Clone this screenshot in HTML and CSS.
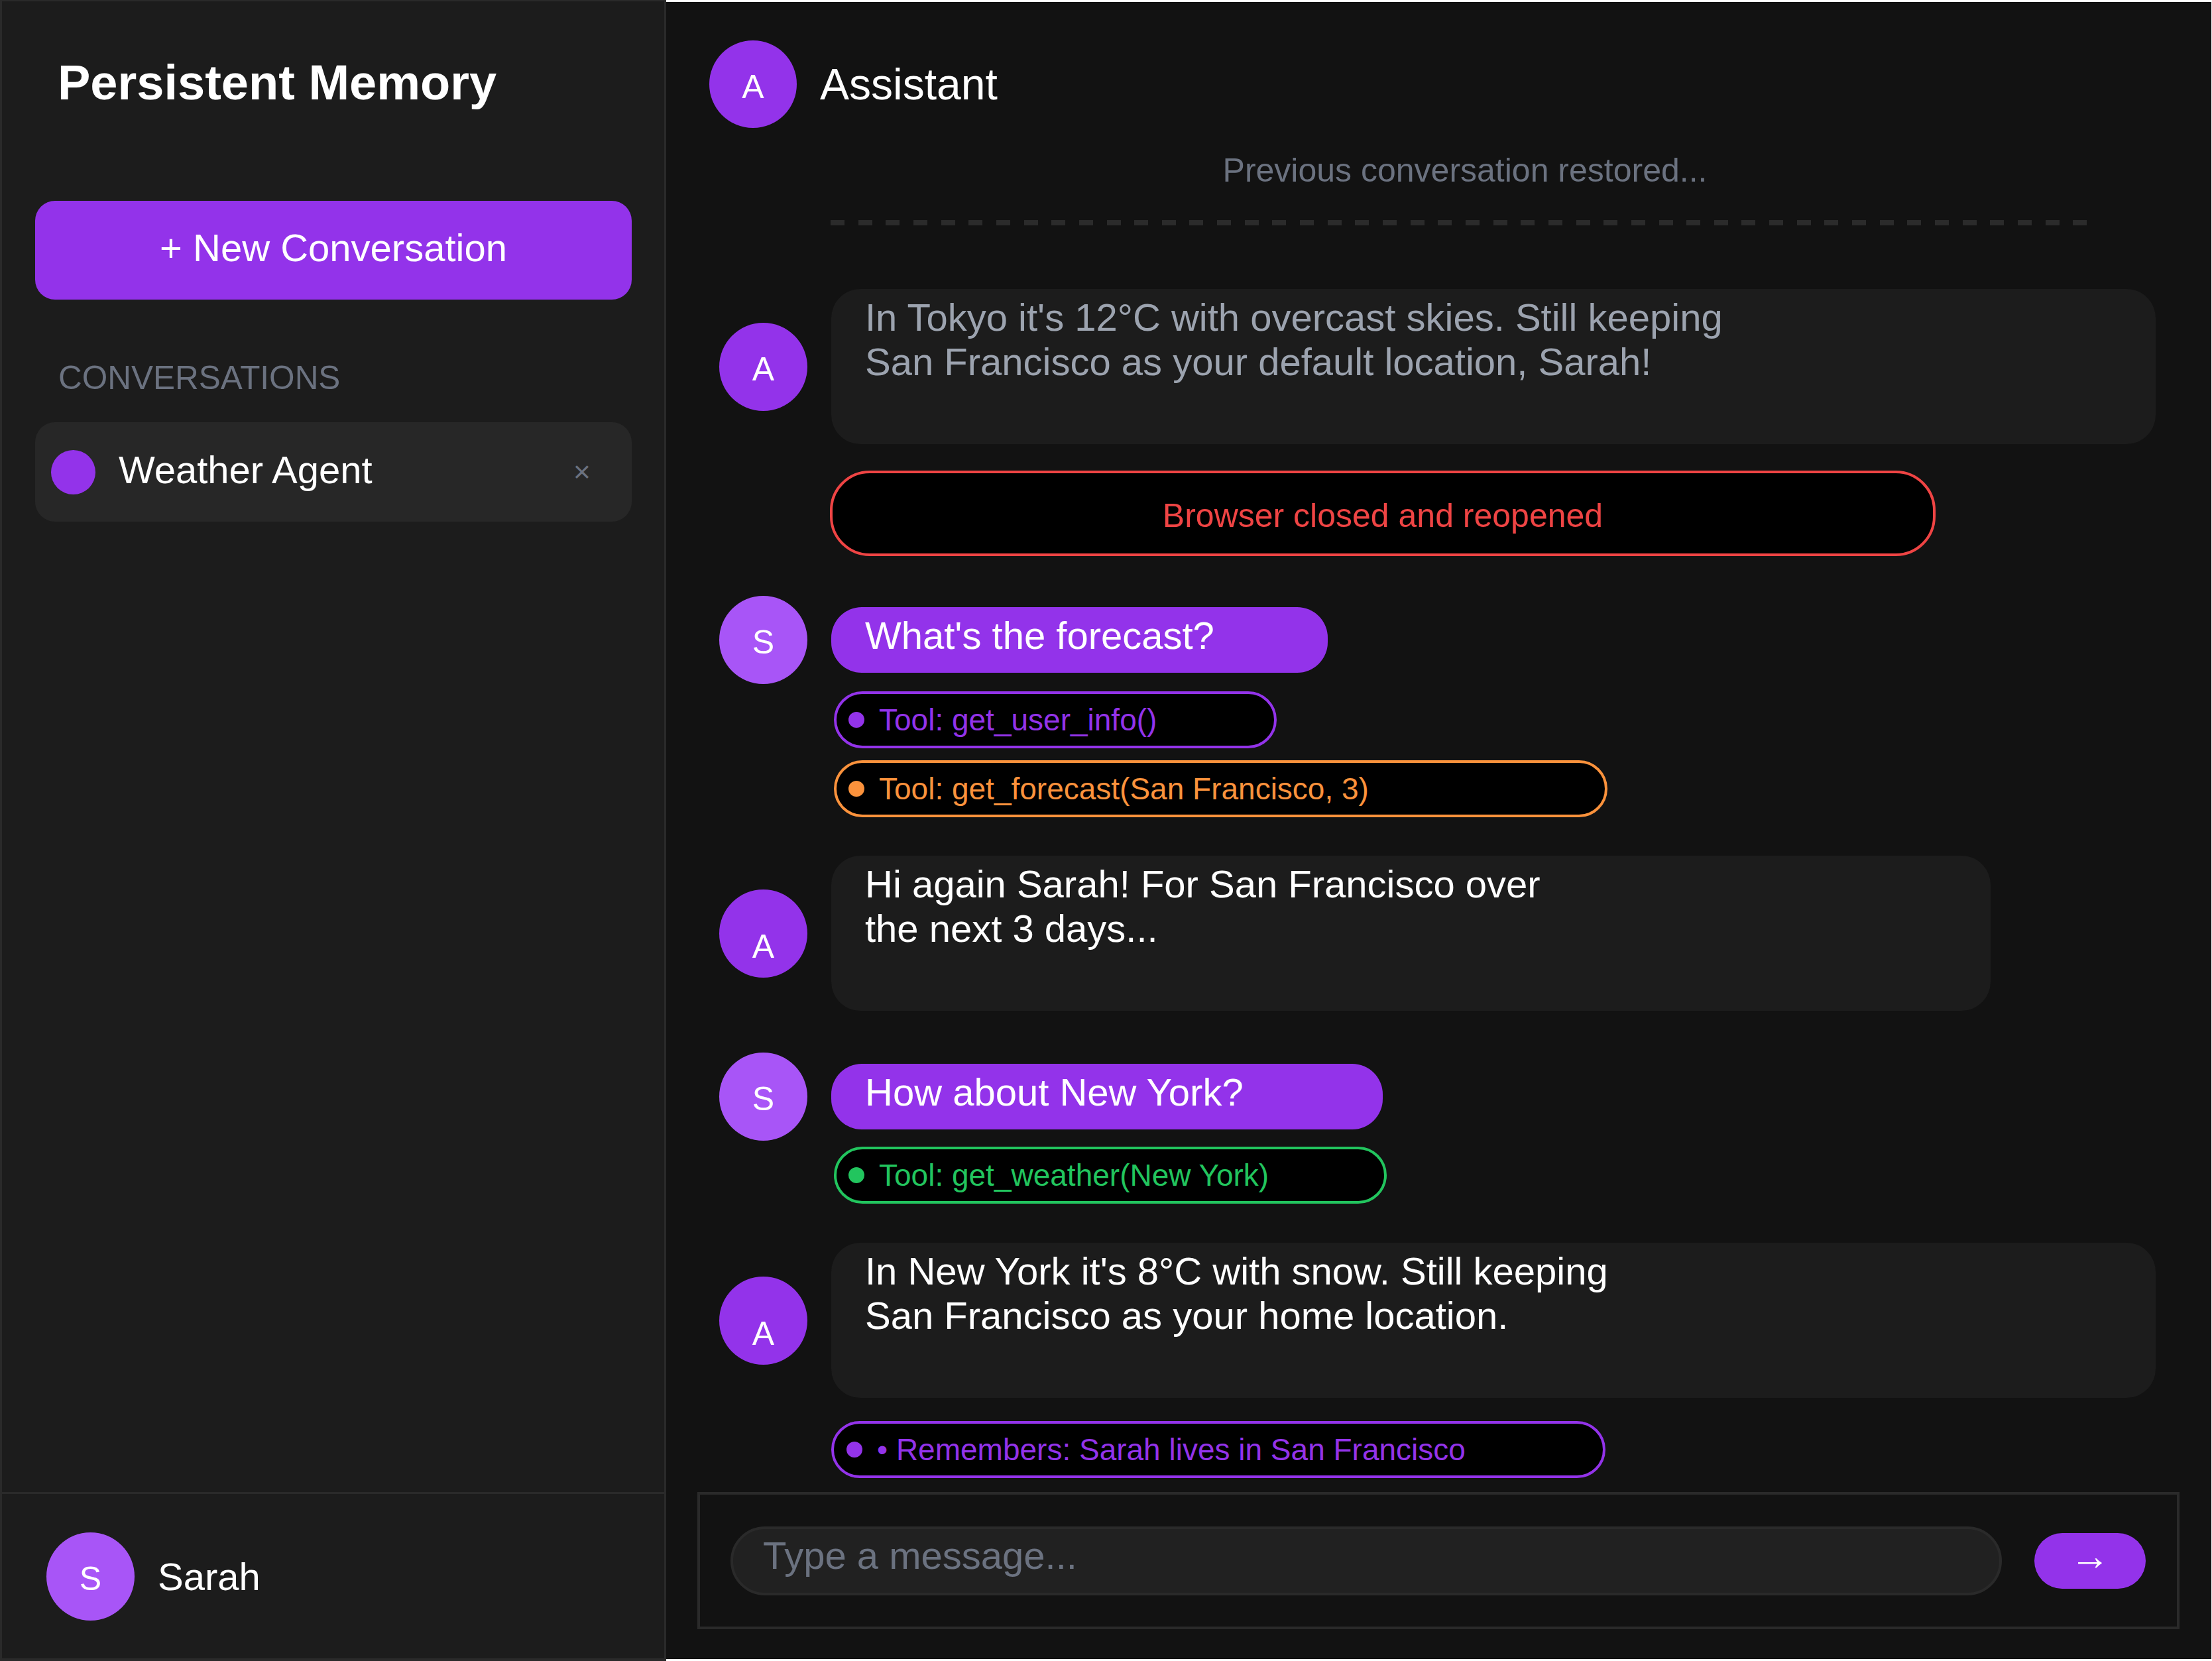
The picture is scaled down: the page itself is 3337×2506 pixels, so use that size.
FILE: index.html
```html
<!DOCTYPE html>
<html lang="en">
<head>
<meta charset="utf-8">
<title>Persistent Memory</title>
<link rel="stylesheet" href="styles.css">
</head>
<body>
<div class="app">
  <aside class="sidebar">
    <div class="sidebar-top">
      <h1 class="brand">Persistent Memory</h1>
      <button class="new-btn">+ New Conversation</button>
      <div class="section-label">CONVERSATIONS</div>
      <div class="conv-item">
        <span class="conv-dot"></span>
        <span class="conv-name">Weather Agent</span>
        <span class="conv-close">×</span>
      </div>
    </div>
    <div class="sidebar-footer">
      <div class="avatar avatar-user">S</div>
      <span class="user-name">Sarah</span>
    </div>
  </aside>

  <main class="chat">
    <header class="chat-header">
      <div class="avatar avatar-bot avatar-header">A</div>
      <span class="chat-title">Assistant</span>
    </header>

    <div class="messages">
      <div class="restored">Previous conversation restored...</div>
      <div class="divider"></div>

      <div class="msg mt-96">
        <div class="avatar avatar-bot">A</div>
        <div class="bubble bubble-bot bubble-muted w-wide">In Tokyo it's 12°C with overcast skies. Still keeping<br>San Francisco as your default location, Sarah!</div>
      </div>

      <div class="event mt-40">Browser closed and reopened</div>

      <div class="msg mt-60">
        <div class="avatar avatar-user">S</div>
        <div class="bubble bubble-user w-u1">What's the forecast?</div>
      </div>

      <div class="tool tool-purple tool-w1 mt-11"><span class="tool-dot"></span>Tool: get_user_info()</div>
      <div class="tool tool-orange tool-w2 mt-18"><span class="tool-dot"></span>Tool: get_forecast(San Francisco, 3)</div>

      <div class="msg mt-58">
        <div class="avatar avatar-bot avatar-low">A</div>
        <div class="bubble bubble-bot w-a2">Hi again Sarah! For San Francisco over<br>the next 3 days...</div>
      </div>

      <div class="msg mt-63">
        <div class="avatar avatar-user">S</div>
        <div class="bubble bubble-user w-u2">How about New York?</div>
      </div>

      <div class="tool tool-green tool-w3 mt-9"><span class="tool-dot"></span>Tool: get_weather(New York)</div>

      <div class="msg mt-59">
        <div class="avatar avatar-bot avatar-low">A</div>
        <div class="bubble bubble-bot w-wide">In New York it's 8°C with snow. Still keeping<br>San Francisco as your home location.</div>
      </div>

      <div class="tool tool-purple tool-memory mt-35"><span class="tool-dot"></span>• Remembers: Sarah lives in San Francisco</div>
    </div>

    <div class="composer">
      <input class="composer-input" type="text" placeholder="Type a message...">
      <button class="send-btn">→</button>
    </div>
  </main>
</div>
</body>
</html>
```

FILE: styles.css
```css
* {
  box-sizing: border-box;
}

html,
body {
  margin: 0;
  padding: 0;
}

body {
  width: 3337px;
  height: 2506px;
  overflow: hidden;
  background: #ffffff;
  font-family: "Liberation Sans", Arial, sans-serif;
}

.app {
  display: flex;
  height: 2506px;
}

/* ---------- Sidebar ---------- */

.sidebar {
  width: 1005px;
  height: 2506px;
  flex: none;
  display: flex;
  flex-direction: column;
  background: #1c1c1c;
  border-style: solid;
  border-color: #2a2a2a;
  border-width: 2px 3px 4px 3px;
}

.sidebar-top {
  display: flex;
  flex-direction: column;
  align-items: flex-start;
  padding: 80px 49px 0 50px;
}

.brand {
  margin: 0 0 0 34px;
  font-size: 74px;
  font-weight: 700;
  line-height: normal;
  color: #ffffff;
}

.new-btn {
  margin-top: 136px;
  width: 900px;
  height: 149px;
  padding: 37px 0 45px;
  border: none;
  border-radius: 30px;
  background: #9333ea;
  color: #ffffff;
  font-family: "Liberation Sans", Arial, sans-serif;
  font-size: 58px;
  line-height: normal;
}

.section-label {
  margin: 89px 0 0 35px;
  font-size: 49.5px;
  line-height: normal;
  color: #6b7280;
}

.conv-item {
  margin-top: 39px;
  width: 900px;
  height: 150px;
  display: flex;
  align-items: center;
  padding: 0 62px 0 24px;
  border-radius: 30px;
  background: #272727;
}

.conv-dot {
  width: 67px;
  height: 67px;
  flex: none;
  border-radius: 50%;
  background: #9333ea;
}

.conv-name {
  margin: 0 0 8px 35px;
  font-size: 58px;
  color: #ffffff;
}

.conv-close {
  margin-left: auto;
  font-size: 45px;
  color: #6b7280;
}

.sidebar-footer {
  margin-top: auto;
  height: 251px;
  display: flex;
  align-items: center;
  gap: 35px;
  padding-left: 67px;
  border-top: 3px solid #2a2a2a;
}

.user-name {
  font-size: 58px;
  color: #ffffff;
}

/* ---------- Avatars ---------- */

.avatar {
  width: 133px;
  height: 133px;
  flex: none;
  display: flex;
  align-items: center;
  justify-content: center;
  padding-top: 7px;
  border-radius: 50%;
  color: #ffffff;
  font-size: 50px;
  line-height: normal;
}

.avatar-user {
  background: #a855f7;
}

.avatar-bot {
  background: #9333ea;
}

.avatar-low {
  padding-top: 40px;
}

.avatar-header {
  width: 132px;
  height: 132px;
}

/* ---------- Chat ---------- */

.chat {
  flex: 1;
  min-width: 0;
  margin: 3px 1px 3px 0;
  display: flex;
  flex-direction: column;
  background: #121212;
}

.chat-header {
  display: flex;
  align-items: center;
  gap: 35px;
  padding: 58px 0 0 65px;
}

.chat-title {
  font-size: 66px;
  color: #ffffff;
}

.messages {
  flex: 1;
  min-height: 0;
  display: flex;
  flex-direction: column;
  align-items: flex-start;
  overflow: hidden;
}

.restored {
  margin: 35px 0 0 248px;
  width: 1895px;
  padding-left: 19px;
  text-align: center;
  font-size: 50px;
  line-height: normal;
  color: #6b7280;
}

.divider {
  margin: 46px 0 0 248px;
  width: 1895px;
  height: 8px;
  background: repeating-linear-gradient(90deg, #2b2b2b 0 21px, transparent 21px 41.65px);
}

.msg {
  display: flex;
  align-items: center;
  gap: 36px;
  padding-left: 80px;
}

.bubble {
  padding: 9px 51px 23px;
  font-size: 58px;
  line-height: normal;
  white-space: nowrap;
}

.bubble-bot {
  padding-bottom: 91px;
  border-radius: 44px;
  background: #1c1c1c;
  color: #ffffff;
}

.bubble-muted {
  color: #9ca3af;
}

.bubble-user {
  border-radius: 46px;
  background: #9333ea;
  color: #ffffff;
}

.w-wide { width: 1998px; }
.w-a2 { width: 1749px; }
.w-u1 { width: 749px; }
.w-u2 { width: 832px; }

.event {
  margin-left: 247px;
  width: 1668px;
  height: 129px;
  padding-top: 35px;
  border: 4px solid #ef4444;
  border-radius: 60px;
  background: #000000;
  color: #ef4444;
  text-align: center;
  font-size: 50px;
  line-height: normal;
}

.tool {
  margin-left: 253px;
  height: 86px;
  display: flex;
  align-items: center;
  padding-left: 18px;
  border: 4px solid currentColor;
  border-radius: 43px;
  background: #000000;
  font-size: 46px;
  line-height: normal;
  white-space: nowrap;
}

.tool-dot {
  width: 24px;
  height: 24px;
  flex: none;
  margin-right: 22px;
  border-radius: 50%;
  background: currentColor;
}

.tool-purple { color: #9333ea; }
.tool-orange { color: #fb923c; }
.tool-green { color: #22c55e; }

.tool-w1 { width: 668px; }
.tool-w2 { width: 1167px; }
.tool-w3 { width: 834px; }

.tool-memory {
  margin-left: 249px;
  width: 1168px;
  padding-left: 19px;
}

.mt-9 { margin-top: 9px; }
.mt-11 { margin-top: 11px; }
.mt-18 { margin-top: 18px; }
.mt-35 { margin-top: 35px; }
.mt-40 { margin-top: 40px; }
.mt-58 { margin-top: 58px; }
.mt-59 { margin-top: 59px; }
.mt-60 { margin-top: 60px; }
.mt-63 { margin-top: 63px; }
.mt-96 { margin-top: 96px; }

/* ---------- Composer ---------- */

.composer {
  flex: none;
  margin: 0 48px 45px 47px;
  height: 207px;
  display: flex;
  align-items: center;
  gap: 49px;
  padding: 0 47px 0 46px;
  border: 4px solid #2a2a2a;
}

.composer-input {
  flex: 1;
  min-width: 0;
  height: 104px;
  padding: 0 45px 16px;
  border: 4px solid #2a2a2a;
  border-radius: 52px;
  background: #212121;
  color: #ffffff;
  font-family: "Liberation Sans", Arial, sans-serif;
  font-size: 58px;
  outline: none;
}

.composer-input::placeholder {
  color: #6b7280;
  opacity: 1;
}

.send-btn {
  width: 168px;
  height: 84px;
  flex: none;
  padding: 0 0 14px;
  border: none;
  border-radius: 42px;
  background: #9333ea;
  color: #ffffff;
  font-family: "Liberation Sans", Arial, sans-serif;
  font-size: 60px;
  line-height: 1;
}
```
